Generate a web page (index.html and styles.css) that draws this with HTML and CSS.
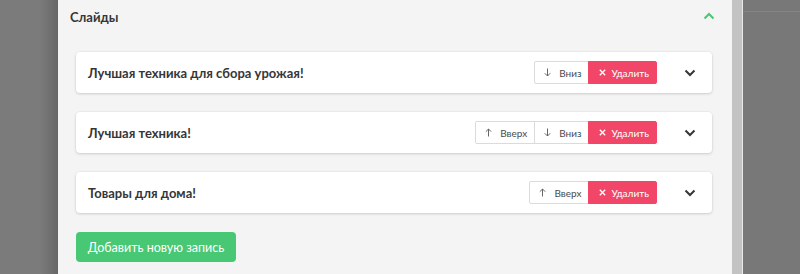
FILE: index.html
```html
<!DOCTYPE html>
<html lang="ru">
<head>
<meta charset="utf-8">
<link rel="stylesheet" href="styles.css">
</head>
<body>
<div class="backdrop-left"></div>
<main class="panel">
  <header class="panel-head">
    <h2 class="panel-title">Слайды</h2>
    <svg class="chev-up" width="12" height="8" viewBox="0 0 12 8"><path d="M1.5 6.5 L6 2 L10.5 6.5" fill="none" stroke="#48c774" stroke-width="2"/></svg>
  </header>
  <section class="slides">
    <div class="card">
      <div class="card-title">Лучшая техника для сбора урожая!</div>
      <div class="btn-group">
        <button class="btn"><svg class="ico" width="7" height="9" viewBox="0 0 7 9"><path d="M3.5 0.5 V8 M0.8 5.3 L3.5 8 L6.2 5.3" fill="none" stroke="#666" stroke-width="1"/></svg>Вниз</button>
        <button class="btn btn-danger"><svg class="ico" width="7" height="7" viewBox="0 0 7 7"><path d="M0.8 0.8 L6.2 6.2 M6.2 0.8 L0.8 6.2" fill="none" stroke="#fff" stroke-width="1.3"/></svg>Удалить</button>
      </div>
      <div class="toggle"><svg width="12" height="8" viewBox="0 0 12 8"><path d="M1.5 1.5 L6 6 L10.5 1.5" fill="none" stroke="#363636" stroke-width="2"/></svg></div>
    </div>
    <div class="card">
      <div class="card-title">Лучшая техника!</div>
      <div class="btn-group">
        <button class="btn"><svg class="ico" width="7" height="9" viewBox="0 0 7 9"><path d="M3.5 8.5 V1 M0.8 3.7 L3.5 1 L6.2 3.7" fill="none" stroke="#666" stroke-width="1"/></svg>Вверх</button>
        <button class="btn"><svg class="ico" width="7" height="9" viewBox="0 0 7 9"><path d="M3.5 0.5 V8 M0.8 5.3 L3.5 8 L6.2 5.3" fill="none" stroke="#666" stroke-width="1"/></svg>Вниз</button>
        <button class="btn btn-danger"><svg class="ico" width="7" height="7" viewBox="0 0 7 7"><path d="M0.8 0.8 L6.2 6.2 M6.2 0.8 L0.8 6.2" fill="none" stroke="#fff" stroke-width="1.3"/></svg>Удалить</button>
      </div>
      <div class="toggle"><svg width="12" height="8" viewBox="0 0 12 8"><path d="M1.5 1.5 L6 6 L10.5 1.5" fill="none" stroke="#363636" stroke-width="2"/></svg></div>
    </div>
    <div class="card">
      <div class="card-title">Товары для дома!</div>
      <div class="btn-group">
        <button class="btn"><svg class="ico" width="7" height="9" viewBox="0 0 7 9"><path d="M3.5 8.5 V1 M0.8 3.7 L3.5 1 L6.2 3.7" fill="none" stroke="#666" stroke-width="1"/></svg>Вверх</button>
        <button class="btn btn-danger"><svg class="ico" width="7" height="7" viewBox="0 0 7 7"><path d="M0.8 0.8 L6.2 6.2 M6.2 0.8 L0.8 6.2" fill="none" stroke="#fff" stroke-width="1.3"/></svg>Удалить</button>
      </div>
      <div class="toggle"><svg width="12" height="8" viewBox="0 0 12 8"><path d="M1.5 1.5 L6 6 L10.5 1.5" fill="none" stroke="#363636" stroke-width="2"/></svg></div>
    </div>
    <button class="btn-add">Добавить новую запись</button>
  </section>
</main>
<div class="scrollbar"></div>
<div class="backdrop-right"><div class="line"></div></div>
</body>
</html>
```
FILE: styles.css
```css
html, body {
  margin: 0;
  padding: 0;
  height: 274px;
  overflow: hidden;
}
body {
  display: flex;
  background: #7a7a7a;
  font-family: Lato, "Open Sans", sans-serif;
  color: #363636;
}
.backdrop-left {
  width: 58px;
  flex: none;
  background: linear-gradient(to right, #7b7b7b 0, #7b7b7b 40px, #6e6e6e 52px, #666 58px);
}
.panel {
  width: 674px;
  flex: none;
  background: #f4f4f4;
  height: 274px;
}
.panel-head {
  display: flex;
  align-items: center;
  justify-content: space-between;
  height: 33px;
  padding: 0 17px 0 12px;
}
.panel-title {
  margin: 0;
  font-size: 13px;
  font-weight: 700;
  color: #363636;
}
.chev-up { display: block; margin-top: -2px; }
.slides {
  padding: 19px 20px 0 18px;
  display: flex;
  flex-direction: column;
  align-items: flex-start;
}
.card {
  align-self: stretch;
  display: flex;
  align-items: center;
  height: 41px;
  background: #fff;
  border-radius: 4px;
  box-shadow: 0 1px 3px rgba(10, 10, 10, 0.15), 0 0 0 1px rgba(10,10,10,0.02);
  padding-left: 12px;
  margin-bottom: 19px;
}
.card-title {
  flex: 1;
  font-size: 13px;
  font-weight: 700;
  color: #363636;
}
.btn-group {
  display: flex;
}
.btn {
  height: 23px;
  box-sizing: border-box;
  border: 1px solid #dbdbdb;
  background: #fff;
  color: #4a4a4a;
  font-family: inherit;
  font-size: 10px;
  line-height: 1;
  padding: 0 7px 0 9px;
  margin: 0 0 0 -1px;
  display: flex;
  align-items: center;
  cursor: pointer;
}
.btn:first-child { border-radius: 2px 0 0 2px; margin-left: 0; }
.btn:last-child { border-radius: 0 2px 2px 0; }
.ico {
  display: block;
  flex: none;
  margin-right: 8px;
}
.btn-danger {
  background: #f14668;
  border-color: #f14668;
  color: #fff;
  padding: 0 7px 0 10px;
}
.btn-danger .ico { margin-right: 5px; }
.toggle {
  width: 55px;
  display: flex;
  justify-content: center;
  padding-left: 10px;
  box-sizing: border-box;
}
.toggle svg { display: block; }
.btn-add {
  height: 30px;
  width: 160px;
  border: none;
  border-radius: 4px;
  background: #48c774;
  color: #fff;
  font-family: inherit;
  font-size: 12.5px;
  padding: 0;
}
.scrollbar {
  width: 10px;
  flex: none;
  background: #c3c3c3;
  border-right: 1px solid #e9e9e9;
}
.backdrop-right {
  flex: 1;
  background: #787878;
}
.backdrop-right .line {
  margin-top: 11px;
  height: 1px;
  background: #858585;
}
```
